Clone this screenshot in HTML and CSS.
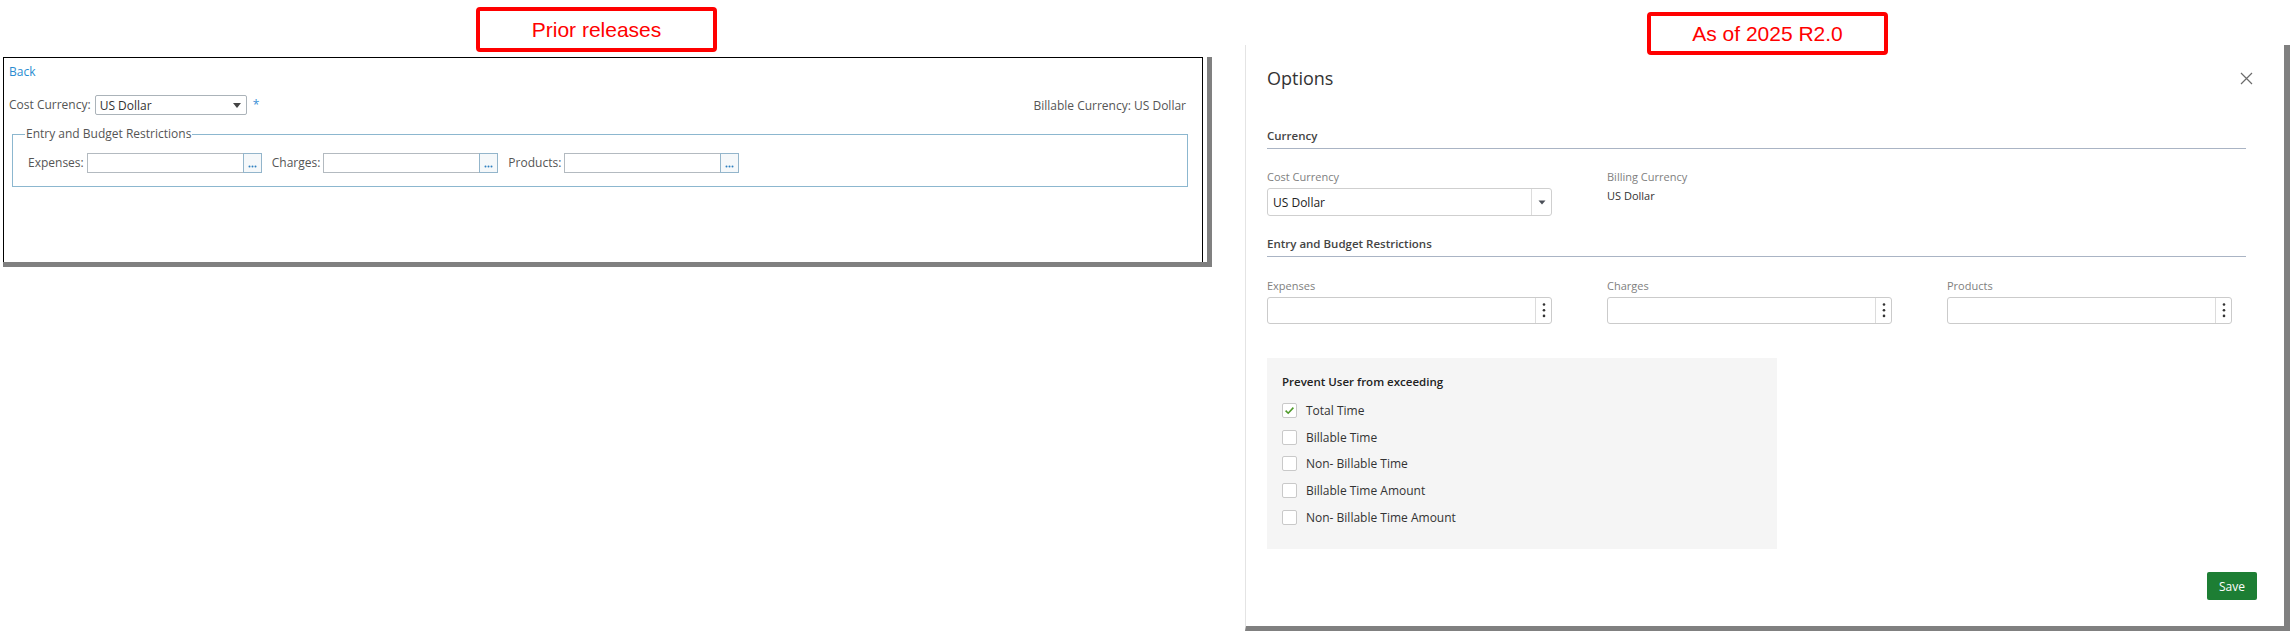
FILE: index.html
```html
<!DOCTYPE html>
<html lang="en">
<head>
<meta charset="utf-8">
<title>Options comparison</title>
<link rel="stylesheet" href="styles.css">
</head>
<body>
<div class="page">
  <section class="col-old">
    <div class="tag tag-old">Prior releases</div>
    <div class="legacy-wrap">
      <div class="legacy">
        <a class="back" href="#">Back</a>
        <div class="legacy-row">
          <div class="cost">
            <span class="lbl">Cost Currency:</span>
            <div class="old-select"><span>US Dollar</span><span class="old-caret"></span></div>
            <span class="req">*</span>
          </div>
          <div class="billable">Billable Currency: US Dollar</div>
        </div>
        <fieldset class="restrict">
          <legend>Entry and Budget Restrictions</legend>
          <div class="lookups">
            <div class="lookup"><span class="lbl">Expenses:</span><span class="old-input"></span><span class="dots-btn"><svg width="17" height="18" viewBox="0 0 17 18"><circle cx="5.5" cy="12.5" r="1" fill="#2f7fc0"/><circle cx="8.5" cy="12.5" r="1" fill="#2f7fc0"/><circle cx="11.5" cy="12.5" r="1" fill="#2f7fc0"/></svg></span></div>
            <div class="lookup"><span class="lbl">Charges:</span><span class="old-input"></span><span class="dots-btn"><svg width="17" height="18" viewBox="0 0 17 18"><circle cx="5.5" cy="12.5" r="1" fill="#2f7fc0"/><circle cx="8.5" cy="12.5" r="1" fill="#2f7fc0"/><circle cx="11.5" cy="12.5" r="1" fill="#2f7fc0"/></svg></span></div>
            <div class="lookup"><span class="lbl">Products:</span><span class="old-input"></span><span class="dots-btn"><svg width="17" height="18" viewBox="0 0 17 18"><circle cx="5.5" cy="12.5" r="1" fill="#2f7fc0"/><circle cx="8.5" cy="12.5" r="1" fill="#2f7fc0"/><circle cx="11.5" cy="12.5" r="1" fill="#2f7fc0"/></svg></span></div>
          </div>
        </fieldset>
      </div>
    </div>
  </section>

  <section class="col-new">
    <div class="tag tag-new">As of 2025 R2.0</div>
    <div class="dialog">
      <header class="dlg-head">
        <h1>Options</h1>
        <button class="close" type="button" aria-label="Close"><svg width="13" height="13" viewBox="0 0 13 13"><path d="M1 1 L12 12 M12 1 L1 12" stroke="#6b6b6b" stroke-width="1.2" fill="none"/></svg></button>
      </header>

      <h2 class="sec">Currency</h2>
      <div class="grid3 currency-row">
        <div class="field">
          <div class="flabel">Cost Currency</div>
          <div class="select"><span class="sel-text">US Dollar</span><span class="sel-btn"><svg width="8" height="5" viewBox="0 0 8 5"><path d="M0.5 0.5 L7.5 0.5 L4 4.5 Z" fill="#4a4f57"/></svg></span></div>
        </div>
        <div class="field">
          <div class="flabel">Billing Currency</div>
          <div class="fvalue">US Dollar</div>
        </div>
      </div>

      <h2 class="sec">Entry and Budget Restrictions</h2>
      <div class="grid3 lookup-row">
        <div class="field">
          <div class="flabel">Expenses</div>
          <div class="kinput"><span class="kfield"></span><span class="kbtn"><svg width="4" height="25" viewBox="0 0 4 25"><circle cx="2" cy="6.5" r="1.3" fill="#333"/><circle cx="2" cy="12.2" r="1.3" fill="#333"/><circle cx="2" cy="17.9" r="1.3" fill="#333"/></svg></span></div>
        </div>
        <div class="field">
          <div class="flabel">Charges</div>
          <div class="kinput"><span class="kfield"></span><span class="kbtn"><svg width="4" height="25" viewBox="0 0 4 25"><circle cx="2" cy="6.5" r="1.3" fill="#333"/><circle cx="2" cy="12.2" r="1.3" fill="#333"/><circle cx="2" cy="17.9" r="1.3" fill="#333"/></svg></span></div>
        </div>
        <div class="field">
          <div class="flabel">Products</div>
          <div class="kinput"><span class="kfield"></span><span class="kbtn"><svg width="4" height="25" viewBox="0 0 4 25"><circle cx="2" cy="6.5" r="1.3" fill="#333"/><circle cx="2" cy="12.2" r="1.3" fill="#333"/><circle cx="2" cy="17.9" r="1.3" fill="#333"/></svg></span></div>
        </div>
      </div>

      <div class="prevent">
        <div class="prevent-title">Prevent User from exceeding</div>
        <ul class="checks">
          <li><span class="cb"><svg width="13" height="13" viewBox="0 0 13 13"><path d="M2.6 6.6 L5.2 9.2 L10.4 3.6" stroke="#4f9a2a" stroke-width="1.6" fill="none"/></svg></span>Total Time</li>
          <li><span class="cb"></span>Billable Time</li>
          <li><span class="cb"></span>Non- Billable Time</li>
          <li><span class="cb"></span>Billable Time Amount</li>
          <li><span class="cb"></span>Non- Billable Time Amount</li>
        </ul>
      </div>

      <div class="dlg-foot"><button class="save" type="button">Save</button></div>
    </div>
  </section>
</div>
</body>
</html>
```

FILE: styles.css
```css
* { box-sizing: border-box; }
html, body { margin: 0; padding: 0; background: #fff; }
body {
  width: 2294px;
  height: 636px;
  overflow: hidden;
  font-family: "Open Sans", "Noto Sans", Arial, sans-serif;
  color: #333;
}
.page { display: flex; align-items: flex-start; }

/* red captions */
.tag {
  width: 241px;
  border: 4px solid #ff0000;
  border-radius: 4px;
  display: flex;
  align-items: center;
  justify-content: center;
  font-family: "Liberation Sans", Arial, sans-serif;
  font-size: 21px;
  color: #ff0000;
  background: #fff;
  position: relative;
  z-index: 1;
}
.tag-old { height: 45px; margin: 7px 0 0 473px; }
.tag-new { height: 43px; margin: 12px 0 0 402px; }

/* ---------- prior release ---------- */
.col-old { flex: none; width: 1212px; padding-left: 3px; }
.legacy-wrap {
  margin-top: 5px;
  width: 1209px;
  padding-right: 4px;
  border-right: 5px solid #808080;
  border-bottom: 5px solid #808080;
}
.legacy {
  height: 205px;
  border: 1px solid #000;
  border-bottom: 0;
  padding: 6px 16px 0 5px;
  font-size: 12px;
  color: #555;
}
.back {
  display: block;
  width: max-content;
  line-height: 16px;
  color: #2a8bd0;
  text-decoration: none;
}
.legacy-row {
  margin-top: 15px;
  height: 20px;
  display: flex;
  align-items: center;
  justify-content: space-between;
}
.cost { display: flex; align-items: center; }
.lbl { line-height: 20px; white-space: nowrap; }
.old-select {
  margin-left: 4px;
  width: 152px;
  height: 20px;
  border: 1px solid #abb3b9;
  border-radius: 2px;
  display: flex;
  align-items: center;
  justify-content: space-between;
  padding: 0 5px 0 4px;
  color: #333;
}
.old-caret {
  width: 0;
  height: 0;
  border-left: 4.5px solid transparent;
  border-right: 4.5px solid transparent;
  border-top: 5px solid #444;
}
.req { margin-left: 6px; color: #3a8fd6; line-height: 20px; }
.billable { white-space: nowrap; }

.restrict {
  margin: 11px -2px 0 3px;
  padding: 11px 15px 13px;
  border: 1px solid #8cb7cf;
  min-width: 0;
}
.restrict legend {
  margin-left: -3px;
  padding: 0 1px;
  line-height: 16px;
  color: #555;
}
.lookups { display: flex; align-items: center; height: 20px; }
.lookup { display: flex; align-items: center; margin-right: 10px; }
.old-input {
  display: block;
  margin-left: 3px;
  width: 156px;
  height: 20px;
  border: 1px solid #b3bac0;
  border-right: 0;
  background: #fff;
}
.dots-btn {
  display: block;
  width: 19px;
  height: 20px;
  border: 1px solid #93b5cb;
  background: #f5f8fa;
}
.dots-btn svg { display: block; }

/* ---------- new dialog ---------- */
.col-new { flex: none; width: 1045px; margin-left: 33px; }
.dialog {
  margin-top: -10px;
  height: 586px;
  background: #fff;
  border-left: 1px solid #e4e4e4;
  border-right: 6px solid #808080;
  border-bottom: 5px solid #808080;
  padding: 21px 38px 0 21px;
  font-size: 12px;
  color: #333;
}
.dlg-head {
  height: 24px;
  display: flex;
  align-items: center;
  justify-content: space-between;
}
.dlg-head h1 {
  margin: 0;
  font-size: 18px;
  font-weight: 400;
  line-height: 24px;
  color: #333;
}
.close {
  width: 13px;
  height: 13px;
  margin-right: -7px;
  padding: 0;
  border: 0;
  background: none;
}
.close svg { display: block; }

.sec {
  margin: 38px 0 0;
  padding-bottom: 4px;
  border-bottom: 1px solid #aab4c4;
  font-size: 11.5px;
  font-weight: 600;
  line-height: 16px;
  color: #444;
}
.sec + .grid3 + .sec { margin-top: 20px; }

.grid3 {
  display: grid;
  grid-template-columns: repeat(3, 285px);
  column-gap: 55px;
}
.currency-row { margin-top: 20px; }
.lookup-row { margin-top: 21px; }

.flabel { font-size: 11px; line-height: 15px; color: #808080; }
.fvalue { margin-top: 4px; font-size: 11px; line-height: 15px; color: #333; }

.select {
  margin-top: 4px;
  height: 28px;
  border: 1px solid #cfcfcf;
  border-radius: 3px;
  display: flex;
  align-items: stretch;
}
.sel-text {
  flex: 1;
  display: flex;
  align-items: center;
  padding-left: 5px;
  font-size: 12px;
  color: #222;
}
.sel-btn {
  width: 20px;
  border-left: 1px solid #dcdcdc;
  display: flex;
  align-items: center;
  justify-content: center;
}
.sel-btn svg { display: block; }

.kinput {
  margin-top: 4px;
  height: 27px;
  border: 1px solid #cbcbcb;
  border-radius: 3px;
  display: flex;
}
.kfield { flex: 1; }
.kbtn {
  width: 16px;
  border-left: 1px solid #dcdcdc;
  display: flex;
  align-items: center;
  justify-content: center;
}
.kbtn svg { display: block; }

.prevent {
  margin-top: 34px;
  width: 510px;
  height: 191px;
  background: #f5f5f5;
  padding: 16px 15px 0;
}
.prevent-title {
  font-size: 11.5px;
  font-weight: 600;
  line-height: 16px;
  color: #222;
}
.checks { list-style: none; margin: 7px 0 0; padding: 0; }
.checks li {
  height: 26.7px;
  display: flex;
  align-items: center;
  font-size: 12px;
  color: #333;
}
.cb {
  flex: none;
  width: 15px;
  height: 15px;
  margin-right: 9px;
  border: 1px solid #c9c9c9;
  border-radius: 2px;
  background: #fff;
}
.cb svg { display: block; }

.dlg-foot {
  margin-top: 23px;
  margin-right: -11px;
  display: flex;
  justify-content: flex-end;
}
.save {
  width: 50px;
  height: 28px;
  border: 0;
  border-radius: 2px;
  background: #1d7e34;
  color: #fff;
  font-family: "Open Sans", "Noto Sans", Arial, sans-serif;
  font-size: 12px;
  padding: 0;
}
```
